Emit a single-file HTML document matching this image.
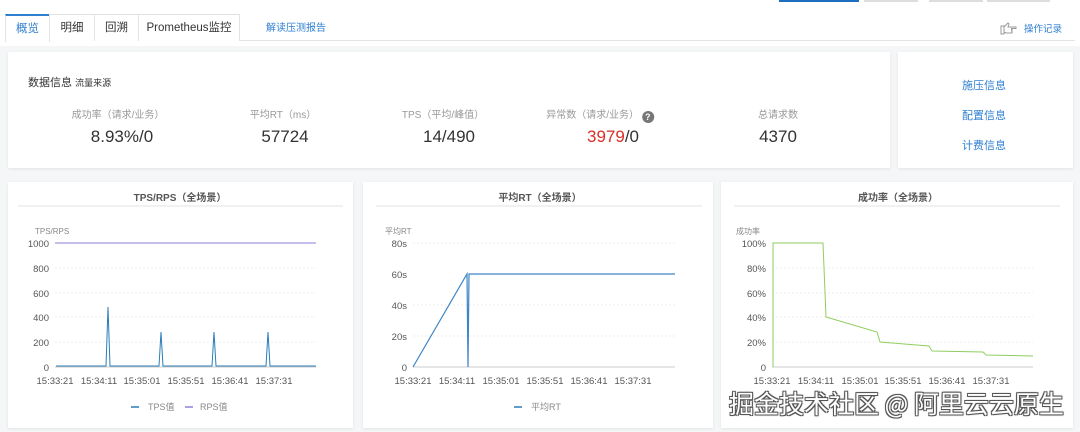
<!DOCTYPE html>
<html><head><meta charset="utf-8"><style>
*{margin:0;padding:0;box-sizing:border-box}
body{width:1080px;height:432px;background:#f5f6f7;font-family:"Liberation Sans","Noto Sans CJK SC",sans-serif;position:relative;overflow:hidden;color:#333}
.a{position:absolute;white-space:nowrap}
.card{position:absolute;background:#fff;box-shadow:0 1px 3px rgba(0,0,0,.08)}
.lbl{font-size:10px;color:#999;transform:translateX(-50%)}
.val{font-size:17px;color:#333;transform:translateX(-50%)}
.link{color:#2f7fd0;font-size:11px}
.tab{position:absolute;top:14px;height:27px;border:1px solid #e3e3e3;border-bottom:none;font-size:11.5px;line-height:26px;text-align:center;color:#333;background:#fff}
svg text{font-family:"Liberation Sans","Noto Sans CJK SC",sans-serif}
</style></head><body>
<div class="a" style="left:0;top:0;width:1080px;height:46px;background:#fff"></div>
<div class="a" style="left:779px;top:0;width:80px;height:2px;background:#1f6fc0"></div>
<div class="a" style="left:864px;top:0;width:54px;height:2px;background:#ddd"></div>
<div class="a" style="left:929px;top:0;width:54px;height:2px;background:#ddd"></div>
<div class="a" style="left:987px;top:0;width:63px;height:2px;background:#ddd"></div>
<div class="a" style="left:5px;top:40px;width:1070px;height:1px;background:#e3e3e3"></div>
<div class="tab" style="left:5px;width:45px;border-top:2px solid #2f7fd0;color:#2f7fd0;height:28px">概览</div>
<div class="tab" style="left:49px;width:46px">明细</div>
<div class="tab" style="left:94px;width:45px">回溯</div>
<div class="tab" style="left:138px;width:102px">Prometheus监控</div>
<div class="a link" style="left:266px;top:19px;font-size:10px">解读压测报告</div>
<svg class="a" style="left:1000px;top:21px" width="18" height="14" viewBox="0 0 18 14"><path d="M1 5h3v8H1zM4 6l4-4 1 1-1 3h8v1.5h-5M11 8.5h1v1.5h-1M11 10h1v2H6l-2-1" fill="none" stroke="#999" stroke-width="1"/></svg>
<div class="a link" style="left:1024px;top:21px;font-size:9.5px">操作记录</div>

<div class="card" style="left:8px;top:52px;width:882px;height:116px"></div>
<div class="a" style="left:28px;top:74px;font-size:11px;color:#333">数据信息 <span style="font-size:9px">流量来源</span></div>
<div class="a lbl" style="left:118px;top:106px">成功率（请求/业务）</div>
<div class="a lbl" style="left:283px;top:106px">平均RT（ms）</div>
<div class="a lbl" style="left:443px;top:106px">TPS（平均/峰值）</div>
<div class="a lbl" style="left:600px;top:106px">异常数（请求/业务） <span style="display:inline-block;width:12px;height:12px;border-radius:6px;background:#777;color:#fff;font-size:9px;text-align:center;line-height:12px;font-weight:bold;vertical-align:-2px">?</span></div>
<div class="a lbl" style="left:778px;top:106px">总请求数</div>
<div class="a val" style="left:122px;top:127px">8.93%/0</div>
<div class="a val" style="left:285px;top:127px">57724</div>
<div class="a val" style="left:449px;top:127px">14/490</div>
<div class="a val" style="left:613px;top:127px"><span style="color:#d93026">3979</span>/0</div>
<div class="a val" style="left:778px;top:127px">4370</div>

<div class="card" style="left:898px;top:52px;width:175px;height:116px"></div>
<div class="a link" style="left:962px;top:77px">施压信息</div>
<div class="a link" style="left:962px;top:107px">配置信息</div>
<div class="a link" style="left:962px;top:137px">计费信息</div>

<div class="card" style="left:8px;top:182px;width:345px;height:246px"></div>
<div class="card" style="left:363px;top:182px;width:350px;height:246px"></div>
<div class="card" style="left:721px;top:182px;width:352px;height:246px"></div>

<svg class="a" style="left:0;top:0" width="1080" height="432">
<g font-size="10" fill="#555" text-anchor="middle" font-weight="bold">
<text x="180" y="201">TPS/RPS（全场景）</text>
<text x="540" y="201">平均RT（全场景）</text>
<text x="898" y="201">成功率（全场景）</text>
</g>
<g stroke="#e3e3e3"><line x1="18" y1="206" x2="343" y2="206"/><line x1="376" y1="206" x2="702" y2="206"/><line x1="734" y1="206" x2="1060" y2="206"/></g>
<g stroke="#eee" stroke-dasharray="2,2">
<line x1="55" y1="268" x2="316" y2="268"/><line x1="55" y1="293" x2="316" y2="293"/><line x1="55" y1="317" x2="316" y2="317"/><line x1="55" y1="342" x2="316" y2="342"/>
<line x1="413" y1="243" x2="675" y2="243"/><line x1="413" y1="305" x2="675" y2="305"/><line x1="413" y1="336" x2="675" y2="336"/>
<line x1="772" y1="268" x2="1033" y2="268"/><line x1="772" y1="293" x2="1033" y2="293"/><line x1="772" y1="317" x2="1033" y2="317"/><line x1="772" y1="342" x2="1033" y2="342"/>
</g>
<g stroke="#ccc"><line x1="55" y1="367" x2="316" y2="367"/><line x1="413" y1="367" x2="675" y2="367"/><line x1="772" y1="367" x2="1033" y2="367"/></g>
<g font-size="8" fill="#888"><text x="35" y="234">TPS/RPS</text><text x="385" y="234">平均RT</text><text x="736" y="234">成功率</text></g>
<g font-size="9.5" fill="#555" text-anchor="end">
<text x="49" y="247">1000</text><text x="49" y="272">800</text><text x="49" y="297">600</text><text x="49" y="321">400</text><text x="49" y="346">200</text><text x="49" y="371">0</text>
<text x="407" y="247">80s</text><text x="407" y="278">60s</text><text x="407" y="309">40s</text><text x="407" y="340">20s</text><text x="407" y="371">0</text>
<text x="766" y="247">100%</text><text x="766" y="272">80%</text><text x="766" y="297">60%</text><text x="766" y="321">40%</text><text x="766" y="346">20%</text><text x="766" y="371">0</text>
</g>
<g font-size="9.5" fill="#555" text-anchor="middle">
<text x="55" y="384">15:33:21</text><text x="99" y="384">15:34:11</text><text x="142" y="384">15:35:01</text><text x="186" y="384">15:35:51</text><text x="230" y="384">15:36:41</text><text x="274" y="384">15:37:31</text>
<text x="413" y="384">15:33:21</text><text x="457" y="384">15:34:11</text><text x="501" y="384">15:35:01</text><text x="545" y="384">15:35:51</text><text x="589" y="384">15:36:41</text><text x="633" y="384">15:37:31</text>
<text x="772" y="384">15:33:21</text><text x="816" y="384">15:34:11</text><text x="860" y="384">15:35:01</text><text x="903" y="384">15:35:51</text><text x="947" y="384">15:36:41</text><text x="991" y="384">15:37:31</text>
</g>
<line x1="55" y1="243" x2="316" y2="243" stroke="#8e7fd8" stroke-width="1"/>
<polyline fill="none" stroke="#2a7db8" stroke-width="1" points="56,366 106,366 108,307 110,366 159,366 161,332 163,366 212,366 214,332 216,366 266,366 268,332 270,366 316,366"/>
<polyline fill="none" stroke="#3d85c6" stroke-width="1.2" points="413,367 467,274 468,367 469,274 675,274"/>
<polyline fill="none" stroke="#8fce5f" stroke-width="1" points="773,367 773,243 823,243 826,317 877,332 880,342 929,346 932,351 983,352 986,355 1033,356"/>
<g font-size="9" fill="#888"><line x1="131" y1="407" x2="139" y2="407" stroke="#2a7db8" stroke-width="1.5"/><text x="148" y="410">TPS值</text>
<line x1="185" y1="407" x2="193" y2="407" stroke="#8e7fd8" stroke-width="1.5"/><text x="200" y="410">RPS值</text>
<line x1="514" y1="407" x2="522" y2="407" stroke="#2a7db8" stroke-width="1.5"/><text x="531" y="410">平均RT</text></g>
</svg>
<div class="a" style="left:729px;top:388px;font-size:25px;color:#fff;font-family:'Noto Sans CJK SC',sans-serif;text-shadow:-1px -1px 0 #555,1px -1px 0 #555,-1px 1px 0 #555,1px 1px 0 #555,0 0 2px #333;line-height:30px">掘金技术社区 @ 阿里云云原生</div>
</body></html>
